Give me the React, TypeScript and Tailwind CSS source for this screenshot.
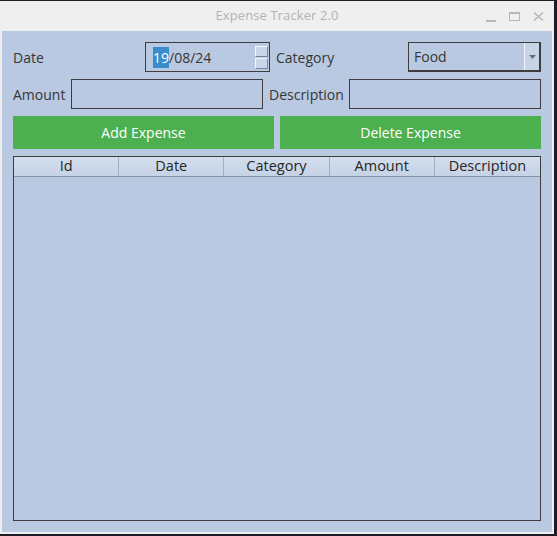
const font = { fontFamily: '"Open Sans", "Noto Sans", sans-serif' };

const columns = ['Id', 'Date', 'Category', 'Amount', 'Description'];

function Field({ width }: { width: string }) {
  return <div className={`h-[30px] border border-[#3d3d3d] bg-[#b8c9e1] ${width}`} />;
}

export default function App() {
  return (
    <div className="w-[557px] h-[536px] bg-[#1d1b26] overflow-hidden" style={font}>
      <div className="mt-[1px] w-[554px] h-[533px] bg-[#efefef] flex flex-col">
        {/* title bar */}
        <div className="relative h-[30px] flex items-center justify-center">
          <span className="text-[13px] text-[#b3b3b3] tracking-[0.1px]">Expense Tracker 2.0</span>
          <div className="absolute right-[10px] top-[11px] flex items-start gap-[13px]">
            <div className="mt-[8px] w-[10px] h-[2px] bg-[#b8b8b8]" />
            <div className="w-[11px] h-[9px] border border-[#b8b8b8] border-t-2" />
            <svg width="11" height="9" viewBox="0 0 11 9">
              <path d="M1 0.5 L10 8.5 M10 0.5 L1 8.5" stroke="#b8b8b8" strokeWidth="1.6" />
            </svg>
          </div>
        </div>

        {/* content */}
        <div className="mx-[2px] mb-[2px] flex-1 bg-[#b8c9e1] pl-[11px] pr-[10px] pt-[11px] pb-[11px] flex flex-col gap-[7px] text-[14px] text-[#363636]">
          <div className="flex items-center h-[30px]">
            <span className="w-[132px]">Date</span>
            <div className="relative w-[125px] h-[30px] border border-[#3d3d3d] flex items-center pl-[7px]">
              <span className="bg-[#3a8ccc] text-white">19</span>
              <span>/08/24</span>
              <div className="absolute right-[1px] top-[3px] flex flex-col gap-[1px]">
                <div className="w-[13px] h-[11px] bg-[#c9d6e9] border border-[#f4f7fb] border-r-[#7d8796] border-b-[#7d8796]" />
                <div className="w-[13px] h-[11px] bg-[#c9d6e9] border border-[#f4f7fb] border-r-[#7d8796] border-b-[#7d8796]" />
              </div>
            </div>
            <span className="ml-[6px] w-[132px]">Category</span>
            <div className="relative w-[133px] h-[30px] border border-[#3d3d3d] border-r-2 border-b-2 flex items-center pl-[5px]">
              <span>Food</span>
              <div className="absolute right-0 top-0 bottom-0 w-[15px] bg-[#c6d4e8] border-l border-l-[#f4f7fb] flex items-center justify-center">
                <svg width="7" height="4" viewBox="0 0 7 4">
                  <path d="M0 0 H7 L3.5 4 Z" fill="#6a6f78" />
                </svg>
              </div>
            </div>
          </div>

          <div className="flex items-center h-[30px]">
            <span className="w-[58px]">Amount</span>
            <Field width="w-[192px]" />
            <span className="ml-[6px] w-[80px]">Description</span>
            <Field width="w-[192px]" />
          </div>

          <div className="flex gap-[6px] h-[33px] text-white">
            <button className="w-[261px] bg-[#4caf50] flex items-center justify-center">Add Expense</button>
            <button className="w-[261px] bg-[#4caf50] flex items-center justify-center">Delete Expense</button>
          </div>

          <div className="w-[528px] flex-1 border border-[#3d3d3d] flex flex-col">
            <div className="grid grid-cols-5 h-[20px] bg-gradient-to-b from-[#d3ddec] to-[#c6d3e6] border-b border-[#8995a6] text-[14.5px] text-[#262626]">
              {columns.map((c, i) => (
                <div
                  key={c}
                  className={`flex items-center justify-center leading-none ${i < 4 ? 'border-r border-[#a3afc0]' : ''}`}
                >
                  {c}
                </div>
              ))}
            </div>
            <div className="flex-1" />
          </div>
        </div>
      </div>
    </div>
  );
}
